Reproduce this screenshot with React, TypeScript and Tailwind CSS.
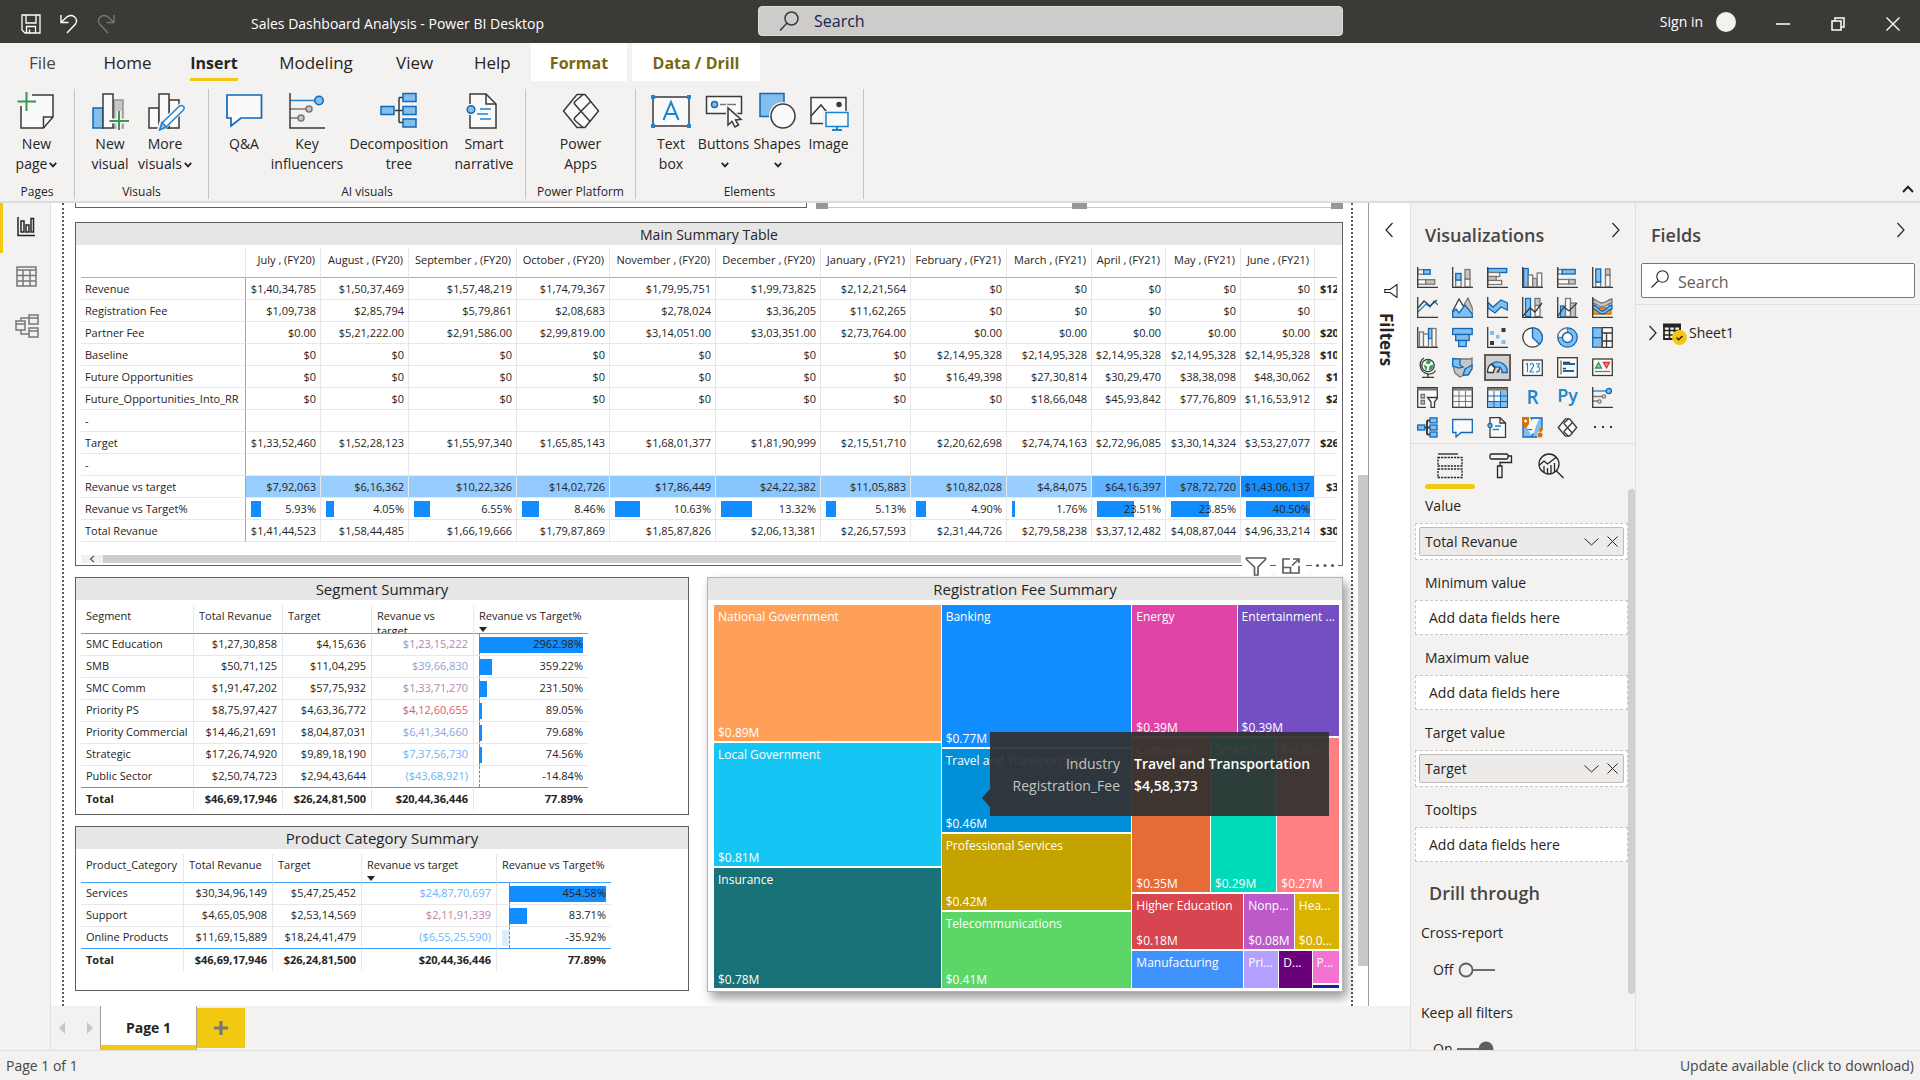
import React from "react";

type Kids = { children: React.ReactNode };

const DARK = "#3b3a39";
const BLUE = "#1068b8";
const SKY = "#83beec";
const GREY = "#c8c6c4";
const PALE = "#fafafa";
const MID = "#797775";

/* ---------- drawing helpers ---------- */

function BigIcon({ children }: Kids) {
  return (
    <svg viewBox="0 0 40 40" className="h-10 w-10 shrink-0" fill="none" stroke={DARK} strokeWidth="1.5" aria-hidden="true">
      {children}
    </svg>
  );
}

function SmallIcon({ children }: Kids) {
  return (
    <svg viewBox="0 0 21 21" className="h-[21px] w-[21px]" fill="none" stroke={DARK} strokeWidth="1.3" aria-hidden="true">
      {children}
    </svg>
  );
}

const Axis = () => <path d="M.7 0V20.3H21" />;

function Chevron({ d, className = "h-4 w-2" }: { d: "left" | "right"; className?: string }) {
  return (
    <svg viewBox="0 0 8 16" className={className} fill="none" stroke="#252423" strokeWidth="1.2" aria-hidden="true">
      <path d={d === "left" ? "M7.5 1L1 8L7.5 15" : "M.5 1L7 8L.5 15"} />
    </svg>
  );
}

function Caret() {
  return (
    <svg viewBox="0 0 8 6" className="ml-0.5 inline h-1.5 w-2" fill="none" stroke="#252423" strokeWidth="1.8" aria-hidden="true">
      <path d="M.8 .8L4 4.4L7.2 .8" />
    </svg>
  );
}

const PowerShape = () => (
  <g strokeLinejoin="round">
    <path d="M16 3.5L2.5 20L16 36.5H24L37.5 20L24 3.5Z" fill={PALE} />
    <path d="M22 3.5L14 10.5Q12.500 12 14 13.500L29.500 31M22 36.500L14 29.500Q12.500 28 14 26.500L30 10" />
  </g>
);

/* ---------- title bar ---------- */

function TitleBar() {
  return (
    <header className="flex h-[43px] shrink-0 items-center bg-[#3b3a37] text-sm text-white">
      <div className="flex w-[620px] shrink-0 items-center pt-[5px]">
        <button aria-label="Save" className="ml-[21px]">
          <svg viewBox="0 0 20 20" className="h-5 w-5" fill="none" stroke="#fff" strokeWidth="1.3">
            <path d="M1 1H19V19H4L1 16Z M5 1V9H15V1 M5.500 19V12.500H14.500V19 M8.500 19V15.500" />
          </svg>
        </button>
        <button aria-label="Undo" className="ml-[18px]">
          <svg viewBox="0 0 20 20" className="h-5 w-5" fill="none" stroke="#fff" strokeWidth="1.4">
            <path d="M2 1V8.500H9.500M2 8.500L7.500 3.200C13 -1 20 4 16.500 10L8 19" />
          </svg>
        </button>
        <button aria-label="Redo" className="ml-[18px]">
          <svg viewBox="0 0 20 20" className="h-5 w-5" fill="none" stroke="#797775" strokeWidth="1.4">
            <path d="M17 1V8.500H9.500M17 8.500L11.500 3.200C6 -1 -1 4 2.500 10L11 19" />
          </svg>
        </button>
        <h1 className="ml-[134px] whitespace-nowrap">Sales Dashboard Analysis - Power BI Desktop</h1>
      </div>
      <label className="mb-px ml-[138px] flex h-[30px] w-[585px] items-center rounded-sm border border-[#dedddb] bg-[#cdccca]">
        <svg viewBox="0 0 20 20" className="ml-5 h-5 w-5" fill="none" stroke="#3b3a39" strokeWidth="1.5" aria-hidden="true">
          <circle cx="12.500" cy="7.500" r="6.500" />
          <path d="M8 12L1 19.500" />
        </svg>
        <input aria-label="Search" placeholder="Search" className="ml-[15px] min-w-0 flex-1 bg-transparent text-base outline-none placeholder:text-[#10254d]" />
      </label>
      <div className="ml-auto flex items-center pr-5">
        <button>Sign in</button>
        <span className="ml-[13px] h-5 w-5 rounded-full bg-[#f3f2f1]" />
        <button aria-label="Minimize" className="ml-[40px] pt-1">
          <svg viewBox="0 0 14 14" className="h-3.5 w-3.5" stroke="#fff" strokeWidth="1.5"><path d="M0 7H14" /></svg>
        </button>
        <button aria-label="Restore" className="ml-[41px] pt-1">
          <svg viewBox="0 0 14 14" className="h-3.5 w-3.5" fill="none" stroke="#fff" strokeWidth="1.5"><path d="M1 4H10V13H1ZM4 4V1H13V10H10" /></svg>
        </button>
        <button aria-label="Close" className="ml-[41px] pt-1">
          <svg viewBox="0 0 14 14" className="h-3.5 w-3.5" stroke="#fff" strokeWidth="1.4"><path d="M.5 .5L13.500 13.500M13.500 .5L.5 13.500" /></svg>
        </button>
      </div>
    </header>
  );
}

/* ---------- ribbon ---------- */

function MenuTabs() {
  const plain = "h-full text-[17px] leading-[40px]";
  return (
    <nav className="flex h-[38px] items-start text-[#252423]">
      <button className={plain + " ml-[29px] w-[26px] text-[#484644]"}>File</button>
      <button className={plain + " ml-[48px] w-[49px]"}>Home</button>
      <button className="ml-[38px] h-full w-[48px] border-b-[3px] border-[#f2c811] text-base leading-[40px] font-bold">Insert</button>
      <button className={plain + " ml-[41px] w-[74px]"}>Modeling</button>
      <button className={plain + " ml-[43px] w-[37px]"}>View</button>
      <button className={plain + " ml-[41px] w-[35px]"}>Help</button>
      <button className="ml-[22px] h-full w-[96px] bg-white text-base leading-[40px] font-bold text-[#7a6610]">Format</button>
      <button className="ml-[5px] h-full w-[128px] bg-white text-base leading-[40px] font-bold whitespace-nowrap text-[#7a6610]">Data / Drill</button>
    </nav>
  );
}

function Tool({ icon, label, w, caret }: { icon: React.ReactNode; label: string[]; w: string; caret?: boolean }) {
  return (
    <button className={"flex flex-col items-center whitespace-nowrap " + w}>
      <BigIcon>{icon}</BigIcon>
      {label.map((l, i) => (
        <span key={i} className="h-5 text-sm leading-[26px]">
          {l}
          {caret && i === label.length - 1 && <Caret />}
        </span>
      ))}
    </button>
  );
}

function Group({ name, w, pad = "", children }: { name: string; w: string; pad?: string; children: React.ReactNode }) {
  return (
    <section className={"flex h-[110px] flex-col justify-between border-r border-[#c8c6c4] pt-[2px] " + w}>
      <div className={"flex " + pad}>{children}</div>
      <h2 className="text-center text-xs leading-[14px]">{name}</h2>
    </section>
  );
}

function Ribbon() {
  return (
    <div className="shrink-0 border-b-2 border-[#dddcda] bg-[#f3f2f1]">
      <MenuTabs />
      <div className="flex items-end pt-2 pb-0.5 text-[#252423]">
        <Group name="Pages" w="w-[75px]">
          <Tool w="w-[73px]" caret label={["New", "page"]} icon={<>
            <path d="M15 4H36V26L26.500 37H4V15" fill={PALE} />
            <path d="M26.500 37V26H36" />
            <path d="M9.500 1V20M.5 10.500H19" stroke="#3a9650" strokeWidth="2" />
          </>} />
        </Group>
        <Group name="Visuals" w="w-[134px]" pad="pl-[7px]">
          <Tool w="w-14" label={["New", "visual"]} icon={<>
            <rect x="3" y="17" width="10" height="20" fill={SKY} stroke={BLUE} />
            <rect x="24" y="9" width="9" height="28" fill={GREY} stroke="#979593" />
            <rect x="13" y="3" width="10" height="34" fill={PALE} />
            <path d="M29 20V39M19.500 30H39" stroke="#f3f2f1" strokeWidth="5" />
            <path d="M29 20V39M19.500 30H39" stroke="#3a9650" strokeWidth="2" />
          </>} />
          <Tool w="w-[54px]" caret label={["More", "visuals"]} icon={<>
            <rect x="4" y="17" width="10" height="20" fill={PALE} />
            <rect x="24" y="9" width="10" height="28" fill={PALE} />
            <rect x="14" y="3" width="10" height="34" fill={PALE} />
            <path d="M36 14L39 18L20 36L14 39L16 32Z" fill="#f3f2f1" stroke="#f3f2f1" strokeWidth="4" />
            <path d="M34.500 15Q37 13.500 39 16Q39.500 18 38 19.500L21 36L17 32Z" fill={PALE} stroke="#1a86d0" />
            <path d="M17 31.500L21.500 36L14.500 39Z" fill={SKY} stroke="#1a86d0" />
          </>} />
        </Group>
        <Group name="AI visuals" w="w-[317px]" pad="pl-[9px]">
          <Tool w="w-[52px]" label={["Q&A"]} icon={<path d="M3 4H37.500V27H17L7 35V27H3Z" fill={PALE} stroke={BLUE} strokeWidth="1.7" />} />
          <Tool w="w-[74px]" label={["Key", "influencers"]} icon={<>
            <path d="M3 9.500H28" stroke="#1a86d0" />
            <path d="M3 18H19M3 27H11" stroke="#797775" />
            <circle cx="32" cy="9.500" r="4.200" fill={SKY} stroke={BLUE} />
            <circle cx="22" cy="18" r="3" fill={GREY} stroke="#797775" />
            <circle cx="14" cy="27" r="3" fill={GREY} stroke="#797775" />
            <path d="M3 2V37H38" />
          </>} />
          <Tool w="w-[110px]" label={["Decomposition", "tree"]} icon={<>
            <path d="M16 19.500H24M20 6.500V31.500M20 6.500H24M20 31.500H24" />
            <g fill={SKY} stroke={BLUE}>
              <rect x="2" y="15.500" width="13" height="8" />
              <rect x="24" y="2.500" width="13" height="8" />
              <rect x="24" y="15.500" width="13" height="8" />
              <rect x="24" y="28" width="13" height="8" />
            </g>
          </>} />
          <Tool w="w-[60px]" label={["Smart", "narrative"]} icon={<>
            <path d="M6 13V3H22L32 13V37H6V24" fill={PALE} />
            <path d="M22 3V13H32" />
            <circle cx="7" cy="18.500" r="3.800" fill={SKY} stroke={BLUE} />
            <path d="M16 18H27M13 23H24M16 28H27" stroke="#1a86d0" />
          </>} />
        </Group>
        <Group name="Power Platform" w="w-[110px]">
          <Tool w="w-full" label={["Power", "Apps"]} icon={<PowerShape />} />
        </Group>
        <Group name="Elements" w="w-[228px]" pad="pl-[9px]">
          <Tool w="w-[52px]" label={["Text", "box"]} icon={<>
            <rect x="2" y="6" width="36" height="29" fill={PALE} />
            <path d="M12.500 29L20 11L27.500 29M15 23H25" stroke="#1a86d0" strokeWidth="2" />
            <g fill="#1a86d0" stroke="none">
              <rect x="0" y="4" width="4" height="4" /><rect x="36" y="4" width="4" height="4" />
              <rect x="0" y="33" width="4" height="4" /><rect x="36" y="33" width="4" height="4" />
            </g>
          </>} />
          <Tool w="w-[53px]" caret label={["Buttons", ""]} icon={<>
            <rect x="2.500" y="5.500" width="35" height="17" fill={PALE} />
            <circle cx="10.500" cy="13.500" r="3" fill={SKY} stroke={BLUE} />
            <path d="M16 13.500H32" stroke="#797775" />
            <path d="M24 17V34L28 30.500L31 36L34.500 34L31.500 29L37 28.500Z" fill={PALE} stroke="#f3f2f1" strokeWidth="4" />
            <path d="M24 17V34L28 30.500L31 36L34.500 34L31.500 29L37 28.500Z" fill={PALE} />
          </>} />
          <Tool w="w-[54px]" caret label={["Shapes", ""]} icon={<>
            <rect x="3" y="2.500" width="24" height="23" fill={SKY} stroke={BLUE} />
            <circle cx="26" cy="25" r="14" fill="#f3f2f1" stroke="none" />
            <circle cx="26" cy="25" r="12" fill={PALE} />
          </>} />
          <Tool w="w-[49px]" label={["Image"]} icon={<>
            <rect x="2" y="6.500" width="35" height="26" fill={PALE} />
            <path d="M2 25L12 14L21 25" />
            <circle cx="30" cy="13.500" r="2" fill={DARK} />
            <path d="M14 20H40V37H14Z" fill="#f3f2f1" stroke="none" />
            <rect x="17" y="21.500" width="22" height="14" fill={PALE} stroke="#1a86d0" />
            <path d="M28 35V39M23 39H33" stroke="#1a86d0" strokeWidth="2" />
          </>} />
        </Group>
        <button aria-label="Collapse ribbon" className="mr-[6px] mb-1.5 ml-auto">
          <svg viewBox="0 0 12 8" className="h-2 w-3" fill="none" stroke="#252423" strokeWidth="2"><path d="M1 7L6 1.800L11 7" /></svg>
        </button>
      </div>
    </div>
  );
}

/* ---------- left rail ---------- */

function Rail() {
  return (
    <nav className="flex w-[51px] shrink-0 flex-col border-r border-[#e1dfdd] bg-[#f3f2f1]">
      <button aria-label="Report" className="flex h-[50px] items-center border-l-[3px] border-[#f2c811] pb-[3px] pl-[14px]">
        <svg viewBox="0 0 18 20" className="h-5 w-[18px]" fill="none" stroke="#252423" strokeWidth="1.500">
          <path d="M1 0V18.500H18" /><path d="M4 15V4H7V15ZM9 15V8H12V15ZM14 15V1.500H16.500V15Z" />
        </svg>
      </button>
      <button aria-label="Data" className="flex h-[47px] items-center pl-4">
        <svg viewBox="0 0 21 21" className="h-[21px] w-[21px]" fill="none" stroke="#797775" strokeWidth="1.500">
          <path d="M1 1H20V20H1ZM1 4H20M1 9.500H20M1 15H20M7 4V20M14 4V20" />
        </svg>
      </button>
      <button aria-label="Model" className="flex h-[52px] items-center pl-[15px]">
        <svg viewBox="0 0 24 24" className="h-6 w-6" fill="none" stroke="#797775" strokeWidth="1.500">
          <path d="M1 7H10V16H1ZM1 10H10M14 1H23V10H14ZM14 4H23M14 14H23V23H14ZM14 17H23M6 7V4H14M6 16V20H14" />
        </svg>
      </button>
    </nav>
  );
}

/* ---------- report visuals ---------- */

const columns: [string, string][] = [
  ["July , (FY20)", "w-[75px]"], ["August , (FY20)", "w-[88px]"], ["September , (FY20)", "w-[108px]"],
  ["October , (FY20)", "w-[93px]"], ["November , (FY20)", "w-[106px]"], ["December , (FY20)", "w-[105px]"],
  ["January , (FY21)", "w-[90px]"], ["February , (FY21)", "w-[96px]"], ["March , (FY21)", "w-[85px]"],
  ["April , (FY21)", "w-[74px]"], ["May , (FY21)", "w-[75px]"], ["June , (FY21)", "w-[74px]"],
];

const Z = "$0";
const N = "$0.00";
const B = "$2,14,95,328";
const rows: { name: string; cells: string[]; total: string; indent?: boolean }[] = [
  { name: "Revenue", cells: ["$1,40,34,785", "$1,50,37,469", "$1,57,48,219", "$1,74,79,367", "$1,79,95,751", "$1,99,73,825", "$2,12,21,564", Z, Z, Z, Z, Z], total: "$12" },
  { name: "Registration Fee", cells: ["$1,09,738", "$2,85,794", "$5,79,861", "$2,08,683", "$2,78,024", "$3,36,205", "$11,62,265", Z, Z, Z, Z, Z], total: "" },
  { name: "Partner Fee", cells: [N, "$5,21,222.00", "$2,91,586.00", "$2,99,819.00", "$3,14,051.00", "$3,03,351.00", "$2,73,764.00", N, N, N, N, N], total: "$20" },
  { name: "Baseline", cells: [Z, Z, Z, Z, Z, Z, Z, B, B, B, B, B], total: "$10" },
  { name: "Future Opportunities", cells: [Z, Z, Z, Z, Z, Z, Z, "$16,49,398", "$27,30,814", "$30,29,470", "$38,38,098", "$48,30,062"], total: "$1", indent: true },
  { name: "Future_Opportunities_Into_RR", cells: [Z, Z, Z, Z, Z, Z, Z, Z, "$18,66,048", "$45,93,842", "$77,76,809", "$1,16,53,912"], total: "$2", indent: true },
  { name: "-", cells: Array(12).fill(""), total: "" },
  { name: "Target", cells: ["$1,33,52,460", "$1,52,28,123", "$1,55,97,340", "$1,65,85,143", "$1,68,01,377", "$1,81,90,999", "$2,15,51,710", "$2,20,62,698", "$2,74,74,163", "$2,72,96,085", "$3,30,14,324", "$3,53,27,077"], total: "$26" },
  { name: "-", cells: Array(12).fill(""), total: "" },
  { name: "Revanue vs target", cells: ["$7,92,063", "$6,16,362", "$10,22,326", "$14,02,726", "$17,86,449", "$24,22,382", "$11,05,883", "$10,82,028", "$4,84,075", "$64,16,397", "$78,72,720", "$1,43,06,137"], total: "$3", indent: true },
  { name: "Revanue vs Target%", cells: ["5.93%", "4.05%", "6.55%", "8.46%", "10.63%", "13.32%", "5.13%", "4.90%", "1.76%", "23.51%", "23.85%", "40.50%"], total: "" },
  { name: "Total Revanue", cells: ["$1,41,44,523", "$1,58,44,485", "$1,66,19,666", "$1,79,87,869", "$1,85,87,826", "$2,06,13,381", "$2,26,57,593", "$2,31,44,726", "$2,79,58,238", "$3,37,12,482", "$4,08,87,044", "$4,96,33,214"], total: "$30" },
];

function heat(cell: string) {
  const t = Number(cell.replace(/[$,]/g, "")) / 14306137;
  return `rgb(${Math.round(160 - 143 * t)}, ${Math.round(209 - 68 * t)}, 255)`;
}

function Bar({ share, text }: { share: number; text: string }) {
  return (
    <div className="grid items-center">
      <span className="col-start-1 row-start-1 h-4 bg-[#118dff]" style={{ width: `${share}%` }} />
      <span className="col-start-1 row-start-1">{text}</span>
    </div>
  );
}

function Card({ title, className, children }: { title: string; className: string; children: React.ReactNode }) {
  return (
    <section className={"flex flex-col border bg-white " + className}>
      <h2 className="h-[22px] shrink-0 bg-[#e6e6e6] text-center leading-[23px] text-[#252423]">{title}</h2>
      {children}
    </section>
  );
}

function MainTable() {
  return (
    <div className="relative mt-[14px] text-sm">
      <Card title="Main Summary Table" className="border-[#5f5f5f] pb-[2px]">
        <div className="mx-[5px] mt-[3px] overflow-hidden">
          <table className="w-full table-fixed border-separate border-spacing-0 text-[11px] whitespace-nowrap text-[#252423]">
            <thead>
              <tr className="h-[30px]">
                <th className="w-[165px] border-r border-b border-r-[#e8e8e8] border-b-[#7abcf5]" aria-label="Measure" />
                {columns.map(([c, w]) => (
                  <th key={c} className={"border-r border-b border-r-[#e8e8e8] border-b-[#7abcf5] p-0 pr-[5px] pb-[6px] text-right font-normal " + w}>{c}</th>
                ))}
                <th className="border-b border-[#7abcf5]" aria-label="Total" />
              </tr>
            </thead>
            <tbody>
              {rows.map((r, ri) => (
                <tr key={ri} className="h-[22px]">
                  <th scope="row" className="border-r border-b border-r-[#6bb3f2] border-b-[#e8e8e8] p-0 pl-1 text-left font-normal">{r.name}</th>
                  {r.cells.map((c, i) => (
                    <td key={i} className="border-r border-b border-[#e8e8e8] p-0 pr-1 pl-[5px] text-right" style={ri === 9 ? { backgroundColor: heat(c) } : undefined}>
                      {ri === 10 ? <Bar share={(parseFloat(c) / 40.5) * 100} text={c} /> : <span className="flex justify-end">{c}</span>}
                    </td>
                  ))}
                  <td className={"overflow-hidden border-b border-[#e8e8e8] p-0 font-bold " + (r.indent ? "pl-[11px]" : "pl-[5px]")}>{r.total}</td>
                </tr>
              ))}
            </tbody>
          </table>
          <div className="mt-[13px] mr-[96px] flex h-2 items-center bg-[#f1f1f1]">
            <svg viewBox="0 0 6 8" className="ml-2 h-2 w-1.5" fill="none" stroke="#605e5c" strokeWidth="1.300" aria-hidden="true"><path d="M5 1L1.500 4L5 7" /></svg>
            <div className="ml-2 h-full flex-1 bg-[#cdcdcd]" />
          </div>
        </div>
      </Card>
      <div className="absolute right-[5px] -bottom-[10px] z-10 flex h-[21px] items-start gap-[6px]">
        <button aria-label="Filters on this visual" className="h-full bg-white px-[3px]">
          <svg viewBox="0 0 22 20" className="h-5 w-[22px]" fill="none" stroke="#605e5c" strokeWidth="1.700"><path d="M1.500 2H20.500V3.500L13 11V19H9.500V11L1.500 3.500Z" /></svg>
        </button>
        <button aria-label="Focus mode" className="h-full bg-white px-[5px]">
          <svg viewBox="0 0 20 18" className="h-[18px] w-5" fill="none" stroke="#605e5c" strokeWidth="1.700"><path d="M9 2H2V16H18V9M2 10.500H9.500V16M12 2H18V6M18 2L11 8.500" /></svg>
        </button>
        <button aria-label="More options" className="h-full bg-white px-[3px]">
          <svg viewBox="0 0 20 18" className="h-[18px] w-5" fill="#605e5c"><circle cx="2.500" cy="8.500" r="1.600" /><circle cx="10" cy="8.500" r="1.600" /><circle cx="17.500" cy="8.500" r="1.600" /></svg>
        </button>
      </div>
    </div>
  );
}

type SumRow = { cells: string[]; tint: string; neg?: number; bar: number };

const segments: SumRow[] = [
  { cells: ["SMC Education", "$1,27,30,858", "$4,15,636", "$1,23,15,222", "2962.98%"], tint: "text-[#a98bb5]", bar: 100 },
  { cells: ["SMB", "$50,71,125", "$11,04,295", "$39,66,830", "359.22%"], tint: "text-[#8aa5da]", bar: 12.1 },
  { cells: ["SMC Comm", "$1,91,47,202", "$57,75,932", "$1,33,71,270", "231.50%"], tint: "text-[#ab89b1]", bar: 7.8 },
  { cells: ["Priority PS", "$8,75,97,427", "$4,63,36,772", "$4,12,60,655", "89.05%"], tint: "text-[#dc5b6c]", bar: 3.2 },
  { cells: ["Priority Commercial", "$14,46,21,691", "$8,04,87,031", "$6,41,34,660", "79.68%"], tint: "text-[#8aa5da]", bar: 3 },
  { cells: ["Strategic", "$17,26,74,920", "$9,89,18,190", "$7,37,56,730", "74.56%"], tint: "text-[#6cb4f8]", bar: 2.6 },
  { cells: ["Public Sector", "$2,50,74,723", "$2,94,43,644", "($43,68,921)", "-14.84%"], tint: "text-[#6cb4f8]", bar: 0 },
];

const products: SumRow[] = [
  { cells: ["Services", "$30,34,96,149", "$5,47,25,452", "$24,87,70,697", "454.58%"], tint: "text-[#6cb4f8]", bar: 93, neg: 7 },
  { cells: ["Support", "$4,65,05,908", "$2,53,14,569", "$2,11,91,339", "83.71%"], tint: "text-[#b786a8]", bar: 17, neg: 7 },
  { cells: ["Online Products", "$11,69,15,889", "$18,24,41,479", "($6,55,25,590)", "-35.92%"], tint: "text-[#6cb4f8]", bar: -7, neg: 7 },
];

const total = ["Total", "$46,69,17,946", "$26,24,81,500", "$20,44,36,446", "77.89%"];
const SortArrow = () => (
  <svg viewBox="0 0 8 5" className="mt-1 block h-[5px] w-2" fill="#252423" aria-label="Sorted descending"><path d="M0 0H8L4 5Z" /></svg>
);

function SummaryTable({ heads, widths, data, width, sorted }: { heads: string[]; widths: string[]; data: SumRow[]; width: string; sorted: number }) {
  return (
    <table className={"mt-[5px] ml-[5px] table-fixed border-separate border-spacing-0 text-[11px] whitespace-nowrap text-[#252423] " + width}>
      <thead>
        <tr>
          {heads.map((h, i) => (
            <th key={h} className={"border-b border-b-[#4ba3f5] p-0 pl-[5px] text-left align-top font-normal " + widths[i] + (i < 4 ? " border-r border-r-[#e8e8e8]" : "")}>
              <div className="h-7 overflow-hidden pt-[3px] leading-[15px] whitespace-pre-line">
                {h}
                {i === sorted && <SortArrow />}
              </div>
            </th>
          ))}
        </tr>
      </thead>
      <tbody>
        {data.map((r, ri) => (
          <tr key={ri} className="h-[22px]">
            {r.cells.map((c, i) => (
              <td
                key={i}
                className={
                  "border-b p-0 pr-[5px] pl-[5px] " +
                  (ri === data.length - 1 ? "border-b-[#3d9cf5] " : "border-b-[#e8e8e8] ") +
                  (i === 0 ? "text-left " : "text-right ") +
                  (i < 4 ? "border-r border-r-[#e8e8e8] " : "") +
                  (i === 3 ? r.tint : "")
                }
              >
                {i < 4 ? (
                  <span className={i ? "flex justify-end" : ""}>{c}</span>
                ) : (
                  <div className="grid items-center">
                    <div className="col-start-1 row-start-1 h-[21px] border-l border-dashed border-[#8a8a8a]" style={{ marginLeft: `${r.neg ?? 0}%` }} />
                    <span
                      className={"col-start-1 row-start-1 h-4 " + (r.bar < 0 ? "bg-[#dcedff]" : "bg-[#118dff]")}
                      style={{ width: `${Math.abs(r.bar)}%`, marginLeft: `${r.bar < 0 ? 0 : r.neg ?? 0}%` }}
                    />
                    <span className="col-start-1 row-start-1">{c}</span>
                  </div>
                )}
              </td>
            ))}
          </tr>
        ))}
        <tr className="h-[22px] font-bold">
          {total.map((c, i) => (
            <td key={i} className={"p-0 pr-[5px] pl-[5px] " + (i ? "text-right" : "text-left") + (i < 4 ? " border-r border-[#e8e8e8]" : "")}>
              <span className={i ? "flex justify-end" : ""}>{c}</span>
            </td>
          ))}
        </tr>
      </tbody>
    </table>
  );
}

/* ---------- treemap ---------- */

function Tile({ name, value, color, grow }: { name?: string; value?: string; color: string; grow: number }) {
  return (
    <div className={"flex min-h-0 min-w-0 basis-0 flex-col justify-between overflow-hidden pl-1 text-xs leading-4 whitespace-nowrap text-white " + color} style={{ flexGrow: grow }}>
      <span className="pt-1">{name}</span>
      <span>{value}</span>
    </div>
  );
}

function Split({ dir, grow, children }: { dir: "row" | "col"; grow: number; children: React.ReactNode }) {
  return (
    <div className={"flex min-h-0 min-w-0 basis-0 " + (dir === "row" ? "flex-row gap-px" : "flex-col gap-0.5")} style={{ flexGrow: grow }}>
      {children}
    </div>
  );
}

function Treemap() {
  return (
    <div className="relative mt-[5px] mr-[3px] mb-[3px] ml-[6px] flex min-h-0 flex-1 gap-px">
      <Split dir="col" grow={227}>
        <Tile name="National Government" value="$0.89M" color="bg-[#ffa058]" grow={136} />
        <Tile name="Local Government" value="$0.81M" color="bg-[#15c6f4]" grow={124} />
        <Tile name="Insurance" value="$0.78M" color="bg-[#197278]" grow={120} />
      </Split>
      <Split dir="col" grow={190}>
        <Tile name="Banking" value="$0.77M" color="bg-[#118dff]" grow={142} />
        <Tile name="Travel and Transportation" value="$0.46M" color="bg-[#0090d9]" grow={84} />
        <Tile name="Professional Services" value="$0.42M" color="bg-[#c4a200]" grow={76} />
        <Tile name="Telecommunications" value="$0.41M" color="bg-[#5bd667]" grow={76} />
      </Split>
      <Split dir="col" grow={207}>
        <Split dir="row" grow={131}>
          <Tile name="Energy" value="$0.39M" color="bg-[#e044a7]" grow={105} />
          <Tile name="Entertainment ..." value="$0.39M" color="bg-[#744ec2]" grow={102} />
        </Split>
        <Split dir="row" grow={154}>
          <Tile name="Consumer ..." value="$0.35M" color="bg-[#e66c37]" grow={79} />
          <Tile name="Smart S..." value="$0.29M" color="bg-[#00dbbc]" grow={66} />
          <Tile name="Retailers" value="$0.27M" color="bg-[#ff8080]" grow={62} />
        </Split>
        <Split dir="row" grow={94}>
          <Split dir="col" grow={111}>
            <Tile name="Higher Education" value="$0.18M" color="bg-[#d64550]" grow={55} />
            <Tile name="Manufacturing" color="bg-[#4092ff]" grow={37} />
          </Split>
          <Split dir="col" grow={95}>
            <Split dir="row" grow={56}>
              <Tile name="Nonp..." value="$0.08M" color="bg-[#bb5ac8]" grow={50} />
              <Tile name="Hea..." value="$0.0..." color="bg-[#d9b300]" grow={44} />
            </Split>
            <Split dir="row" grow={37}>
              <Tile name="Pri..." color="bg-[#b59fff]" grow={33} />
              <Tile name="D..." color="bg-[#6b007b]" grow={31} />
              <Split dir="col" grow={29}>
                <Tile name="P..." color="bg-[#f472d0]" grow={33} />
                <Tile color="bg-[#12239e]" grow={3} />
              </Split>
            </Split>
          </Split>
        </Split>
      </Split>
      <div role="tooltip" className="absolute top-[127px] right-[10px] flex h-[84px] w-[339px] bg-[rgba(48,48,48,0.93)] pt-[21px] text-sm leading-[22px] whitespace-nowrap">
        <svg viewBox="0 0 8 18" className="absolute top-[57px] -left-2 h-[18px] w-2" fill="#303436" aria-hidden="true"><path d="M8 0V18L0 9Z" /></svg>
        <dl className="grid h-min grid-cols-[130px_auto] gap-x-[14px]">
          <dt className="text-right text-[#c3c3c3]">Industry</dt>
          <dd className="font-semibold text-white">Travel and Transportation</dd>
          <dt className="text-right text-[#c3c3c3]">Registration_Fee</dt>
          <dd className="font-semibold text-white">$4,58,373</dd>
        </dl>
      </div>
    </div>
  );
}

function Canvas() {
  return (
    <main className="flex min-h-0 min-w-0 flex-1 overflow-hidden border-r border-[#a19f9d] bg-white pl-[11px]">
      <div className="flex min-w-0 flex-1 flex-col border-x-2 border-dotted border-[#5a5a5a] pr-2 pl-[11px]">
        <div className="flex h-[5px] gap-[9px]">
          <div className="flex-[731] border-x border-b border-[#5f5f5f]" />
          <div className="flex flex-[528] justify-between bg-[linear-gradient(to_top,#c8c8c8_1px,transparent_1px)]">
            <span className="h-[6px] w-3 bg-[#979797]" />
            <span className="h-[6px] w-[15px] bg-[#979797]" />
            <span className="h-[6px] w-3 bg-[#979797]" />
          </div>
        </div>
        <MainTable />
        <div className="mt-[11px] flex items-start gap-[18px]">
          <div className="flex min-w-0 flex-[614] flex-col gap-[11px] text-[15px]">
            <Card title="Segment Summary" className="h-[238px] border-[#5f5f5f]">
              <SummaryTable
                heads={["Segment", "Total Revanue", "Target", "Revanue vs\ntarget", "Revanue vs Target%"]}
                widths={["w-[113px]", "w-[89px]", "w-[89px]", "w-[102px]", "w-[114px]"]}
                width="w-[507px]"
                data={segments}
                sorted={4}
              />
            </Card>
            <Card title="Product Category Summary" className="h-[165px] border-[#5f5f5f]">
              <SummaryTable
                heads={["Product_Category", "Total Revanue", "Target", "Revanue vs target", "Revanue vs Target%"]}
                widths={["w-[103px]", "w-[89px]", "w-[89px]", "w-[135px]", "w-[114px]"]}
                width="w-[530px]"
                data={products}
                sorted={3}
              />
            </Card>
          </div>
          <div className="flex min-w-0 flex-[636] text-[15px]">
            <Card title="Registration Fee Summary" className="h-[415px] w-full border-[#b3b3b3] shadow-[4px_6px_10px_rgba(0,0,0,0.4)]">
              <Treemap />
            </Card>
          </div>
        </div>
      </div>
      <div className="ml-[5px] w-[10px] pt-[272px]">
        <div className="h-[491px] bg-[#c8c8c8]" />
      </div>
    </main>
  );
}

/* ---------- right panes ---------- */

function FiltersPane() {
  return (
    <aside className="flex w-[41px] shrink-0 flex-col items-center bg-white pt-[19px] pr-px">
      <button aria-label="Expand filters"><Chevron d="left" /></button>
      <svg viewBox="0 0 14 14" className="mt-[46px] ml-1 h-3.5 w-3.5" fill="none" stroke="#252423" strokeWidth="1.100" aria-hidden="true">
        <path d="M13 .5V13.500L6 8.500H.8V5.500H6Z" />
      </svg>
      <h2 className="mt-[15px] mr-1.5 text-[17px] leading-6 font-bold text-[#252423] [writing-mode:vertical-rl]">Filters</h2>
    </aside>
  );
}

const R = (x: number, y: number, w: number, h: number, k: "b" | "w" | "g") => (
  <rect x={x} y={y} width={w} height={h} fill={k === "b" ? SKY : k === "w" ? PALE : GREY} stroke={k === "b" ? BLUE : MID} />
);

const gallery: [string, React.ReactNode][] = [
  ["Stacked bar chart", <>{R(0.7, 2.7, 6, 4.5, "w")}{R(6.7, 2.7, 6.5, 4.5, "b")}{R(0.7, 12.7, 8, 4.5, "w")}{R(8.7, 12.7, 9, 4.5, "g")}<Axis /></>],
  ["Stacked column chart", <>{R(3.7, 13, 5.3, 7, "w")}{R(3.7, 6.5, 5.3, 6.5, "b")}{R(13, 12, 5, 8, "w")}{R(13, 2.5, 5, 9.5, "g")}<Axis /></>],
  ["Clustered bar chart", <>{R(0.7, 1.5, 19, 4, "b")}{R(0.7, 5.5, 12, 4, "w")}{R(0.7, 9.5, 8.5, 4, "g")}{R(0.7, 13.5, 14, 4, "w")}<Axis /></>],
  ["Clustered column chart", <>{R(1.7, 1.5, 4.5, 19, "b")}{R(6.2, 8, 4.5, 12, "w")}{R(10.7, 11.5, 4.5, 9, "g")}{R(15.2, 6, 4.5, 14, "w")}<Axis /></>],
  ["100% stacked bar chart", <>{R(0.7, 2.5, 4.5, 4.5, "w")}{R(5.2, 2.5, 13, 4.5, "b")}{R(0.7, 12.5, 11, 4.5, "w")}{R(11.7, 12.5, 6.5, 4.5, "g")}<Axis /></>],
  ["100% stacked column chart", <>{R(3.7, 15, 5, 5, "w")}{R(3.7, 2, 5, 13, "b")}{R(13.5, 8, 4.5, 12, "w")}{R(13.5, 2, 4.5, 6, "g")}<Axis /></>],
  ["Line chart", <><path d="M1 15L9 7L13 10L17 4L21 8" stroke="#1a86d0" /><path d="M1 11L7 4L13 9L20 3" /><Axis /></>],
  ["Area chart", <><path d="M9 13L16 1L21 13V20Z" fill={GREY} stroke={MID} /><path d="M.7 14L7 2L13 12L8 18H.7Z" fill={PALE} /><path d="M.7 20.300V15L4 12L7 16L13 8L20.300 17V20.300Z" fill={SKY} stroke={BLUE} /></>],
  ["Stacked area chart", <><path d="M.7 5L6 10L14 3L20.500 6V13L14 10L8 16L.7 11Z" fill={SKY} stroke={BLUE} /><Axis /></>],
  ["Line and stacked column chart", <>{R(3.5, 1.5, 5, 18, "b")}{R(13, 1.5, 5, 7, "g")}{R(13, 8.5, 5, 11, "w")}<path d="M1 19L8 11L13 15L20 6" /><Axis /></>],
  ["Line and clustered column chart", <>{R(3.5, 9, 5, 11, "b")}{R(8.5, 1.5, 5, 18, "w")}{R(13.5, 6, 5, 14, "g")}<path d="M1 19L7 10L12 14L20 6" /><Axis /></>],
  ["Ribbon chart", <><path d="M1 11H19V17H1Z" fill="#f6941e" stroke="#d86f00" /><path d="M1 2C5 3 7 6 10 6C14 6 15 3 20 2V6C15 7 14 10 10 10C7 10 5 7 1 6Z" fill={GREY} stroke={MID} /><path d="M1 8C6 8 6 14 10.500 14C15 14 15 8 20 8V12C16 12 15 17 10.500 17C6 17 5 12 1 12Z" fill={SKY} stroke={BLUE} /><Axis /></>],
  ["Waterfall chart", <>{R(2.5, 5, 4, 15, "w")}{R(6.5, 7, 5, 13, "w")}{R(11.5, 1.5, 3.5, 10, "b")}{R(15, 1.5, 4, 18.5, "w")}<Axis /></>],
  ["Funnel chart", <>{R(0.7, 1.5, 19.5, 6, "b")}{R(3.7, 7.5, 13.5, 6, "b")}{R(6.7, 13.5, 7.5, 6, "b")}</>],
  ["Scatter chart", <><g stroke="none"><path d="M3 4H7V8H3ZM9 8H12.500V11.500H9ZM14.500 13H18.500V17H14.500Z" fill={SKY} /><path d="M14.500 1H18.500V5H14.500ZM3 14H7V18H3Z" fill={DARK} /></g><Axis /></>],
  ["Pie chart", <><circle cx="10.500" cy="10.500" r="9.700" fill={PALE} /><path d="M10.500 .8A9.700 9.700 0 0 1 17.500 17.300L10.500 10.500Z" fill={SKY} stroke={BLUE} /></>],
  ["Donut chart", <><circle cx="10.500" cy="10.500" r="9.700" fill={SKY} stroke={BLUE} /><path d="M.8 10.500A9.700 9.700 0 0 1 10.500 .8V5.500A5 5 0 0 0 5.500 10.500Z" fill={PALE} stroke={MID} /><circle cx="10.500" cy="10.500" r="5" fill={PALE} stroke={BLUE} /></>],
  ["Treemap", <>{R(0.7, 0.7, 9.5, 10, "b")}{R(0.7, 10.7, 9.5, 9.5, "b")}<path d="M10.200 .7H20.300V6H10.200ZM10.200 6H14.500V14H10.200ZM14.500 6H20.300V14H14.500ZM10.200 14H14.500V20.300H10.200ZM14.500 14H20.300V20.300H14.500Z" fill={PALE} /></>],
  ["Map", <><circle cx="11" cy="8.500" r="6.200" fill={PALE} /><path d="M11 3L14 4L12 7L9 6ZM7 8L10 10L9 13ZM13 9L16 8L15 12L12 13Z" fill="#2f9e4f" stroke="#2f9e4f" strokeWidth=".8" /><path d="M7 1C1 5 2 15 11 17C14 17.200 17 16 18.500 13.500M11 17V20M5 20.300H17" /></>],
  ["Filled map", <><path d="M7 2H18L20 1V10L17 17L12 18L8 20L3 16L1 9Z" fill={GREY} stroke={MID} /><path d="M.7 1.500L8 2V8L11 10L7 11L.7 9ZM13 12L20 8L20 12L16 18L11 18Z" fill={SKY} stroke={BLUE} /></>],
  ["Gauge", <><path d="M.7 15.500A10 10 0 0 1 4 7L8 11Q6.500 13 6.500 15.500Z" fill={PALE} /><path d="M5 6.500A10 10 0 0 1 20.300 15.500H15A4.500 4.500 0 0 0 8.500 10.500Z" fill={SKY} stroke={BLUE} /><path d="M9 15.500L14 9L12 15.500Z" fill={DARK} stroke="none" /></>],
  ["Card", <><rect x=".7" y="3" width="19.600" height="15.500" fill={PALE} /><path d="M4 7.500L5.500 6.500V15M8 8Q8.500 6.500 10 6.500Q12 6.800 11.500 9L8 15H12M14 6.700H17.500L15.500 9.800Q18 10 17.500 13Q16.500 15.500 14 14.700" stroke="#1a86d0" strokeWidth="1.100" /></>],
  ["Multi-row card", <><rect x=".7" y=".7" width="19.600" height="19.600" fill={PALE} /><path d="M4 3.500V17.500" stroke={MID} /><path d="M6 5.500H13M6 11.500H9" /><path d="M6 7H18M6 14H17" stroke={BLUE} strokeWidth="2" /></>],
  ["KPI", <><rect x=".7" y="2" width="19.600" height="16.500" fill={PALE} /><path d="M6.500 5.500L9.500 11H3.500Z" fill="#8ed0a0" stroke="#3a9650" /><path d="M11.500 5.500H17.500L14.500 11Z" fill="#f28b8b" stroke="#d13438" /><path d="M3 14.500H18" stroke={MID} /></>],
  ["Slicer", <><path d="M9 20.300H.7V.7H20.300V10" fill={PALE} /><path d="M.7 2.300H20.300" stroke={MID} strokeWidth="2.500" /><path d="M4 7.500H7.500V11H4ZM4 13.500H7.500V17H4Z" fill={GREY} stroke={MID} /><path d="M10.500 10.500H21L17.500 15V20.500H14V15Z" fill={PALE} /></>],
  ["Table", <><rect x=".7" y=".7" width="19.600" height="19.600" fill={PALE} /><path d="M.7 2.300H20.300" stroke={MID} strokeWidth="2.500" /><path d="M7 4V20M13.500 4V20M1 9H20M1 14.500H20" stroke={MID} strokeWidth="1" /></>],
  ["Matrix", <><rect x=".7" y=".7" width="19.600" height="19.600" fill={PALE} /><path d="M13.500 4H20V20H1V14.500H13.500Z" fill={SKY} stroke="none" /><path d="M.7 2.300H20.300" stroke={MID} strokeWidth="2.500" /><path d="M7 4V20M13.500 4V20M1 9H20M1 14.500H20" stroke={BLUE} strokeWidth="1" /></>],
  ["R script visual", <text x="10.500" y="17" textAnchor="middle" fontSize="19" fontWeight="600" fill="#1f86c9" stroke="none">R</text>],
  ["Python visual", <text x="10.500" y="15" textAnchor="middle" fontSize="18" fontWeight="600" fill="#1f86c9" stroke="none">Py</text>],
  ["Key influencers", <><path d="M.7 4H14" stroke="#1a86d0" /><path d="M.7 9.500H11M.7 14H6" stroke={MID} /><circle cx="16.800" cy="4" r="2.600" fill={SKY} stroke={BLUE} /><circle cx="12" cy="9.500" r="1.600" fill={PALE} stroke={MID} /><circle cx="7.500" cy="14.500" r="1.600" fill={PALE} stroke={MID} /><Axis /></>],
  ["Decomposition tree", <><path d="M8 10.500H13M10 3.500V17.500M10 3.500H13M10 17.500H13" strokeWidth="2" />{R(0.7, 8, 7, 5, "b")}{R(13, 0.9, 7, 5, "b")}{R(13, 8, 7, 5, "b")}{R(13, 15, 7, 5, "b")}</>],
  ["Q&A", <path d="M.7 2.500H20.300V15.500H9L4 20V15.500H.7Z" fill={PALE} stroke={BLUE} />],
  ["Smart narrative", <><path d="M3 6V.7H13L18.500 6V20.300H3V11" fill={PALE} /><path d="M13 .7V6H18.500" /><circle cx="3" cy="8.500" r="2" fill={SKY} stroke={BLUE} /><path d="M8 9H14M5.500 12.500H12" stroke="#1a86d0" /></>],
  ["ArcGIS map", <><path d="M1 5V20H15L20 12V1H9L12 6L6 12L12 13L10 19" fill={SKY} stroke={BLUE} /><path d="M10 2H17L14 9L12 16L9 17L10 12H5L9 7Z" fill={PALE} stroke="none" /><path d="M0 0H7V7L3.500 12L0 7Z" fill="#d86f00" stroke="none" /><circle cx="3.500" cy="4" r="1.500" fill={PALE} stroke="none" /><circle cx="18" cy="18" r="3" fill="#d86f00" stroke="#f3f2f1" strokeWidth=".8" /><circle cx="19" cy="12.500" r="1.800" fill="#d86f00" stroke="none" /></>],
  ["Power Apps", <g transform="scale(.525)" strokeWidth="2.600"><PowerShape /></g>],
  ["More visuals", <path d="M2 9H4V11H2ZM10 9H12V11H10ZM18 9H20V11H18Z" fill={DARK} stroke="none" />],
];

function FieldWell({ label, field }: { label: string; field?: string }) {
  return (
    <section className="mb-[13px]">
      <h3 className="mb-[7px] ml-[10px] h-5 leading-5">{label}</h3>
      {field ? (
        <div className="flex h-[37px] border border-dashed border-[#c8c6c4] bg-white p-[3px]">
          <div className="flex flex-1 items-center rounded-xs border border-[#bebbb8] bg-[#edebe9] pl-[5px]">
            <span className="flex-1">{field}</span>
            <button aria-label={"Options for " + field} className="mr-2">
              <svg viewBox="0 0 15 8" className="h-2 w-[15px]" fill="none" stroke="#252423" strokeWidth="1"><path d="M.5 .5L7.500 7L14.500 .5" /></svg>
            </button>
            <button aria-label={"Remove " + field} className="mr-[5px]">
              <svg viewBox="0 0 11 11" className="h-[11px] w-[11px]" stroke="#252423" strokeWidth="1"><path d="M.5 .5L10.500 10.500M10.500 .5L.5 10.500" /></svg>
            </button>
          </div>
        </div>
      ) : (
        <div className="h-[35px] border border-dashed border-[#c8c6c4] bg-white pl-[13px] leading-[34px]">Add data fields here</div>
      )}
    </section>
  );
}

function Toggle({ name, on }: { name: string; on: boolean }) {
  return (
    <label className="relative ml-[18px] flex h-5 items-center gap-[5px]">
      <input type="checkbox" aria-label={name} defaultChecked={on} className="sr-only" />
      <span>{on ? "On" : "Off"}</span>
      <svg viewBox="0 0 37 16" className="h-4 w-[37px]" fill="none" stroke="#605e5c" strokeWidth="1.800" aria-hidden="true">
        {on ? <><path d="M0 8H24" /><circle cx="29" cy="8" r="6.500" fill="#605e5c" /></> : <><circle cx="8" cy="8" r="6.500" /><path d="M14.500 8H37" /></>}
      </svg>
    </label>
  );
}

function VisualizationsPane() {
  return (
    <aside className="flex w-[225px] shrink-0 flex-col overflow-hidden border-l border-[#e1dfdd] bg-[#f3f2f1]">
      <div className="flex h-[61px] shrink-0 items-start justify-between pr-[15px] pl-[14px]">
        <h2 className="pt-[19px] text-lg leading-[26px] font-semibold text-[#484644]">Visualizations</h2>
        <button aria-label="Collapse visualizations" className="pt-[19px]"><Chevron d="right" /></button>
      </div>
      <div className="grid shrink-0 grid-cols-[repeat(6,27px)] gap-x-2 gap-y-[3px] pl-[3px]">
        {gallery.map(([name, art], i) => (
          <button key={name} aria-label={name} className={"flex h-[27px] w-[27px] items-center justify-center " + (i === 20 ? "border-2 border-[#605e5c] bg-[#d2d0ce]" : "")}>
            <SmallIcon>{art}</SmallIcon>
          </button>
        ))}
      </div>
      <div className="mt-0.5 flex h-[46px] shrink-0 border-t border-[#e1dfdd] pl-[14px]">
        <button aria-label="Fields" className="flex w-[50px] flex-col items-center justify-between pt-[9px]">
          <svg viewBox="0 0 26 26" className="h-[26px] w-[26px]" fill="none" stroke="#252423" strokeWidth="1.300">
            <path d="M1 1H21" /><path d="M1 4.500H25V13H1ZM1 16H25V24.500H1Z" strokeDasharray="2.200 1" />
          </svg>
          <span className="h-[5px] w-full rounded-full bg-[#f2c811]" />
        </button>
        <button aria-label="Format" className="ml-[14px] flex pt-[9px]">
          <svg viewBox="0 0 24 26" className="h-[26px] w-6" fill="none" stroke="#252423" strokeWidth="1.300">
            <rect x="1" y="1" width="18" height="5" rx="1.500" /><path d="M19 3H22.500V9.500H11V13M8.500 13H13V24.500H8.500Z" />
          </svg>
        </button>
        <button aria-label="Analytics" className="ml-[25px] flex pt-[9px]">
          <svg viewBox="0 0 26 26" className="h-[26px] w-[26px]" fill="none" stroke="#252423" strokeWidth="1.300">
            <circle cx="11" cy="11" r="10" /><path d="M18.500 18L25.500 25M1.500 12L6 8L9.500 11L18 4.500M6 19V13M9.500 21V15M13 21V12M16.500 19V10" />
          </svg>
        </button>
      </div>
      <div className="flex min-h-0 flex-1 overflow-hidden text-sm text-[#252423]">
        <div className="min-w-0 flex-1 pt-[7px] pl-1">
          <FieldWell label="Value" field="Total Revanue" />
          <FieldWell label="Minimum value" />
          <FieldWell label="Maximum value" />
          <FieldWell label="Target value" field="Target" />
          <FieldWell label="Tooltips" />
          <h2 className="mt-[18px] ml-[14px] text-lg leading-[26px] font-semibold text-[#484644]">Drill through</h2>
          <h3 className="mt-[17px] ml-[6px] leading-5">Cross-report</h3>
          <div className="mt-[17px]"><Toggle name="Cross-report" on={false} /></div>
          <h3 className="mt-[23px] ml-[6px] leading-5">Keep all filters</h3>
          <div className="mt-4"><Toggle name="Keep all filters" on /></div>
        </div>
        <div className="h-[505px] w-[7px] rounded-full bg-[#d2d0ce]" />
      </div>
    </aside>
  );
}

function FieldsPane() {
  return (
    <aside className="w-[285px] shrink-0 border-l border-[#e1dfdd] bg-[#f3f2f1]">
      <div className="flex h-[60px] items-start justify-between pr-[15px] pl-[15px]">
        <h2 className="pt-[19px] text-lg leading-[26px] font-semibold text-[#484644]">Fields</h2>
        <button aria-label="Collapse fields" className="pt-[19px]"><Chevron d="right" /></button>
      </div>
      <div className="border-b border-[#e1dfdd] pr-[5px] pb-[6px] pl-[5px]">
        <label className="flex h-[35px] items-center rounded-xs border border-[#797775] bg-white">
          <svg viewBox="0 0 18 18" className="mb-1 ml-[9px] h-[18px] w-[18px]" fill="none" stroke="#252423" strokeWidth="1.100" aria-hidden="true">
            <circle cx="11.500" cy="6.500" r="5.700" /><path d="M7.500 10.500L.5 17.500" />
          </svg>
          <input aria-label="Search fields" placeholder="Search" className="ml-[9px] min-w-0 flex-1 bg-transparent pt-0.5 text-base outline-none placeholder:text-[#605e5c]" />
        </label>
      </div>
      <button className="mt-4 ml-[13px] flex h-6 items-center text-sm text-[#252423]">
        <Chevron d="right" />
        <svg viewBox="0 0 26 24" className="ml-1.5 h-6 w-[26px]" fill="none" stroke="#252423" aria-hidden="true">
          <path d="M1 4V18H17V4Z" strokeWidth="1.800" /><path d="M0 4.500H18" strokeWidth="4" /><path d="M6.500 5V18M11.500 5V18M1 9.500H17M1 14H17" strokeWidth="1.500" />
          <circle cx="16.500" cy="16.500" r="7.500" fill="#f2c811" stroke="none" /><path d="M13.500 16.500L15.700 18.700L19.500 15" strokeWidth="1.600" />
        </svg>
        <span>Sheet1</span>
      </button>
    </aside>
  );
}

/* ---------- bottom ---------- */

function PageTabs() {
  return (
    <nav className="flex h-11 shrink-0 bg-[#f3f2f1]">
      <button aria-label="Previous page" className="ml-2"><svg viewBox="0 0 6 12" className="h-3 w-1.5" fill="#c8c6c4"><path d="M6 0V12L0 6Z" /></svg></button>
      <button aria-label="Next page" className="ml-[22px]"><svg viewBox="0 0 6 12" className="h-3 w-1.5" fill="#c8c6c4"><path d="M0 0V12L6 6Z" /></svg></button>
      <button className="ml-[7px] w-[97px] border-x border-b-[5px] border-x-[#a19f9d] border-b-[#f2c811] bg-white pt-1 text-sm font-bold text-[#252423]">Page 1</button>
      <button aria-label="New page" className="mt-0.5 flex h-10 w-12 items-center justify-center bg-[#f2c811]">
        <svg viewBox="0 0 14 14" className="h-3.5 w-3.5" stroke="#797775" strokeWidth="3.200"><path d="M7 0V14M0 7H14" /></svg>
      </button>
    </nav>
  );
}

export default function App() {
  return (
    <div className="flex h-screen flex-col overflow-hidden bg-[#f3f2f1] font-['Open_Sans','Noto_Sans',sans-serif]">
      <TitleBar />
      <Ribbon />
      <div className="flex min-h-0 flex-1">
        <Rail />
        <div className="flex min-w-0 flex-1 flex-col">
          <div className="flex min-h-0 flex-1">
            <Canvas />
            <FiltersPane />
          </div>
          <PageTabs />
        </div>
        <VisualizationsPane />
        <FieldsPane />
      </div>
      <footer className="flex h-[30px] shrink-0 items-center justify-between border-t border-[#e1dfdd] px-[6px] text-sm text-[#484644]">
        <span>Page 1 of 1</span>
        <button>Update available (click to download)</button>
      </footer>
    </div>
  );
}
